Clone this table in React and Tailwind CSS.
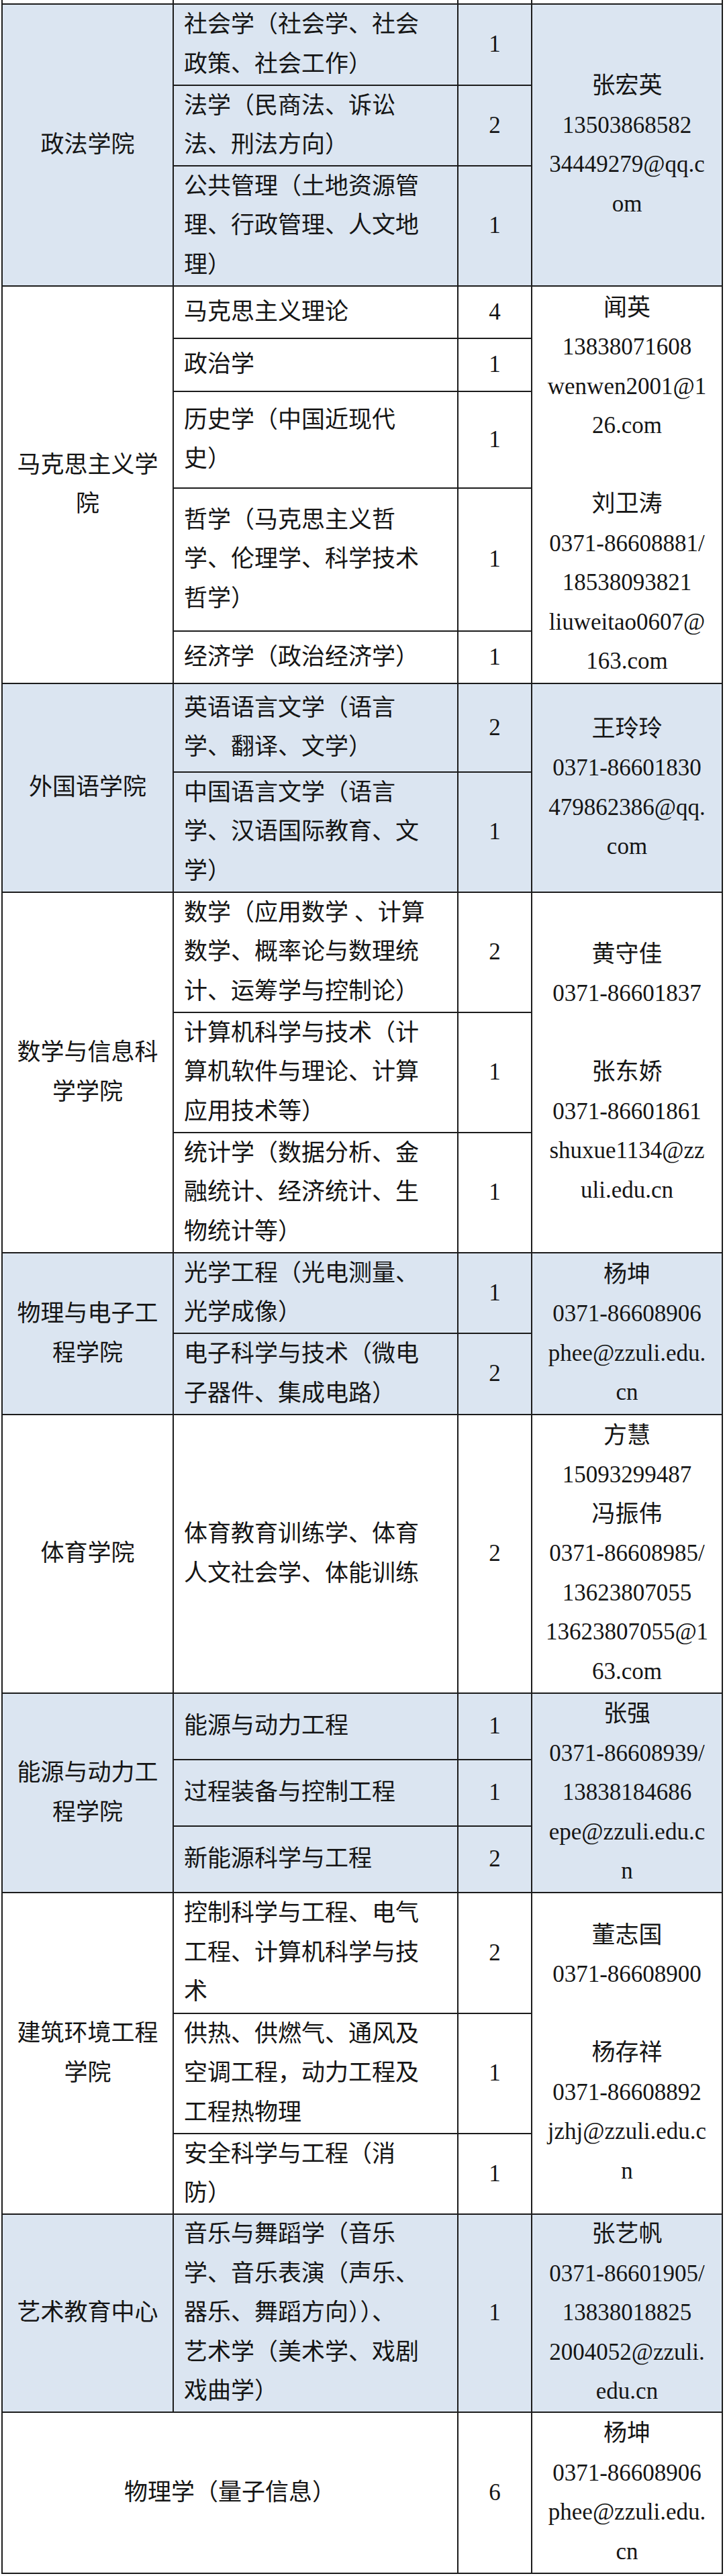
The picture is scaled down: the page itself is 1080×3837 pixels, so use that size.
import React from "react";

const blocks = [
  {
    name: ["政法学院"],
    blue: true,
    rows: [
      { h: "h-[121px]", lines: ["社会学（社会学、社会", "政策、社会工作）"], n: "1" },
      { h: "h-[120px]", lines: ["法学（民商法、诉讼", "法、刑法方向）"], n: "2" },
      { h: "h-[179px]", lines: ["公共管理（土地资源管", "理、行政管理、人文地", "理）"], n: "1" },
    ],
    contact: ["张宏英", "13503868582", "34449279@qq.c", "om"],
  },
  {
    name: ["马克思主义学", "院"],
    blue: false,
    rows: [
      { h: "h-[78px]", lines: ["马克思主义理论"], n: "4" },
      { h: "h-[79px]", lines: ["政治学"], n: "1" },
      { h: "h-[144px]", lines: ["历史学（中国近现代", "史）"], n: "1" },
      { h: "h-[213px]", lines: ["哲学（马克思主义哲", "学、伦理学、科学技术", "哲学）"], n: "1" },
      { h: "h-[78px]", lines: ["经济学（政治经济学）"], n: "1" },
    ],
    contact: [
      "闻英",
      "13838071608",
      "wenwen2001@1",
      "26.com",
      "",
      "刘卫涛",
      "0371-86608881/",
      "18538093821",
      "liuweitao0607@",
      "163.com",
    ],
  },
  {
    name: ["外国语学院"],
    blue: true,
    rows: [
      { h: "h-[132px]", lines: ["英语语言文学（语言", "学、翻译、文学）"], n: "2" },
      { h: "h-[179px]", lines: ["中国语言文学（语言", "学、汉语国际教育、文", "学）"], n: "1" },
    ],
    contact: ["王玲玲", "0371-86601830", "479862386@qq.", "com"],
  },
  {
    name: ["数学与信息科", "学学院"],
    blue: false,
    rows: [
      { h: "h-[179px]", lines: ["数学（应用数学 、计算", "数学、概率论与数理统", "计、运筹学与控制论）"], n: "2" },
      { h: "h-[179px]", lines: ["计算机科学与技术（计", "算机软件与理论、计算", "应用技术等）"], n: "1" },
      { h: "h-[179px]", lines: ["统计学（数据分析、金", "融统计、经济统计、生", "物统计等）"], n: "1" },
    ],
    contact: ["黄守佳", "0371-86601837", "", "张东娇", "0371-86601861", "shuxue1134@zz", "uli.edu.cn"],
  },
  {
    name: ["物理与电子工", "程学院"],
    blue: true,
    rows: [
      { h: "h-[120px]", lines: ["光学工程（光电测量、", "光学成像）"], n: "1" },
      { h: "h-[121px]", lines: ["电子科学与技术（微电", "子器件、集成电路）"], n: "2" },
    ],
    contact: ["杨坤", "0371-86608906", "phee@zzuli.edu.", "cn"],
  },
  {
    name: ["体育学院"],
    blue: false,
    rows: [{ h: "h-[415px]", lines: ["体育教育训练学、体育", "人文社会学、体能训练"], n: "2" }],
    contact: ["方慧", "15093299487", "冯振伟", "0371-86608985/", "13623807055", "13623807055@1", "63.com"],
  },
  {
    name: ["能源与动力工", "程学院"],
    blue: true,
    rows: [
      { h: "h-[99px]", lines: ["能源与动力工程"], n: "1" },
      { h: "h-[99px]", lines: ["过程装备与控制工程"], n: "1" },
      { h: "h-[99px]", lines: ["新能源科学与工程"], n: "2" },
    ],
    contact: ["张强", "0371-86608939/", "13838184686", "epe@zzuli.edu.c", "n"],
  },
  {
    name: ["建筑环境工程", "学院"],
    blue: false,
    rows: [
      { h: "h-[180px]", lines: ["控制科学与工程、电气", "工程、计算机科学与技", "术"], n: "2" },
      { h: "h-[179px]", lines: ["供热、供燃气、通风及", "空调工程，动力工程及", "工程热物理"], n: "1" },
      { h: "h-[120px]", lines: ["安全科学与工程（消", "防）"], n: "1" },
    ],
    contact: ["董志国", "0371-86608900", "", "杨存祥", "0371-86608892", "jzhj@zzuli.edu.c", "n"],
  },
  {
    name: ["艺术教育中心"],
    blue: true,
    rows: [
      {
        h: "h-[295px]",
        lines: ["音乐与舞蹈学（音乐", "学、音乐表演（声乐、", "器乐、舞蹈方向））、", "艺术学（美术学、戏剧", "戏曲学）"],
        n: "1",
      },
    ],
    contact: ["张艺帆", "0371-86601905/", "13838018825", "2004052@zzuli.", "edu.cn"],
  },
];

const line = "border-[#1c1c1c]";

function Lines({ items }) {
  return items.map((t, i) => (
    <div key={i} className="h-[58.5px] leading-[58.5px] whitespace-nowrap">
      {t}
    </div>
  ));
}

function Block({ b }) {
  return (
    <div className={`flex ${b.blue ? "bg-[#dbe5f1]" : "bg-white"}`}>
      <div className={`w-[255px] shrink-0 border-r-2 border-b-2 ${line} flex flex-col items-center justify-center`}>
        <Lines items={b.name} />
      </div>
      <div className="w-[534px] shrink-0 flex flex-col">
        {b.rows.map((r, i) => (
          <div key={i} className={`flex ${r.h}`}>
            <div className={`w-[424px] shrink-0 border-r-2 border-b-2 ${line} pl-[15px] flex flex-col justify-center`}>
              <Lines items={r.lines} />
            </div>
            <div className={`w-[110px] shrink-0 border-r-2 border-b-2 ${line} flex items-center justify-center`}>
              {r.n}
            </div>
          </div>
        ))}
      </div>
      <div className={`flex-1 border-b-2 ${line} flex flex-col items-center justify-center`}>
        <Lines items={b.contact} />
      </div>
    </div>
  );
}

export default function App() {
  return (
    <div className="min-h-[3837px] w-[1080px] bg-white text-[35px] text-[#151515] font-['Liberation_Serif','Noto_Sans_CJK_SC',serif]">
      <div className={`ml-[2px] w-[1075px] border-l-2 border-r-2 ${line}`}>
        {/* tail of the row above */}
        <div className="flex h-[7px]">
          <div className={`w-[255px] shrink-0 border-r-2 border-b-2 ${line}`} />
          <div className={`w-[424px] shrink-0 border-r-2 border-b-2 ${line}`} />
          <div className={`w-[110px] shrink-0 border-r-2 border-b-2 ${line}`} />
          <div className={`flex-1 border-b-2 ${line}`} />
        </div>

        {blocks.map((b, i) => (
          <Block key={i} b={b} />
        ))}

        <div className="flex h-[240px] bg-white">
          <div className={`w-[679px] shrink-0 border-r-2 border-b-2 ${line} flex items-center justify-center`}>
            物理学（量子信息）
          </div>
          <div className={`w-[110px] shrink-0 border-r-2 border-b-2 ${line} flex items-center justify-center`}>
            6
          </div>
          <div className={`flex-1 border-b-2 ${line} flex flex-col items-center justify-center`}>
            <Lines items={["杨坤", "0371-86608906", "phee@zzuli.edu.", "cn"]} />
          </div>
        </div>
      </div>
    </div>
  );
}
